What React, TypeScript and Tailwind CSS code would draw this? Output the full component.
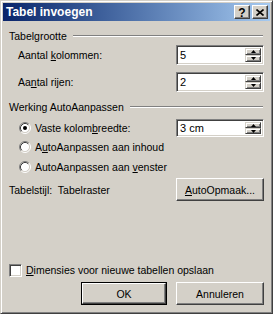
import React from "react";

const raised =
  "border border-t-white border-l-white border-r-[#404040] border-b-[#404040] shadow-[inset_-1px_-1px_#808080,inset_1px_1px_#d4d0c8]";
const sunken =
  "border border-t-[#808080] border-l-[#808080] border-r-white border-b-white shadow-[inset_1px_1px_#404040,inset_-1px_-1px_#d4d0c8]";

function Arrow({ up }: { up?: boolean }) {
  return (
    <svg width="5" height="3" viewBox="0 0 5 3" className="block">
      {up ? (
        <polygon points="2.5,0 5,3 0,3" fill="#000" />
      ) : (
        <polygon points="0,0 5,0 2.5,3" fill="#000" />
      )}
    </svg>
  );
}

function SpinBtn({ up, h }: { up?: boolean; h: string }) {
  return (
    <div
      className={`${h} w-[16px] bg-[#d4d0c8] flex items-center justify-center border border-t-[#d4d0c8] border-l-[#d4d0c8] border-r-[#404040] border-b-[#404040] shadow-[inset_1px_1px_#fff,inset_-1px_-1px_#808080]`}
    >
      <Arrow up={up} />
    </div>
  );
}

function Spin({ value, tall }: { value: string; tall?: boolean }) {
  return (
    <div className={`w-[88px] ${tall ? "h-[20px]" : "h-[18px]"} bg-white ${sunken} p-[2px] flex`}>
      <div className="flex-1 pl-[1px] flex items-center leading-[14px] text-[11px]">{value}</div>
      <div className="flex flex-col">
        <SpinBtn up h={tall ? "h-[8px]" : "h-[7px]"} />
        <SpinBtn h={tall ? "h-[8px]" : "h-[7px]"} />
      </div>
    </div>
  );
}

function Radio({ checked }: { checked?: boolean }) {
  return (
    <svg width="12" height="12" viewBox="0 0 12 12" className="block shrink-0">
      <circle cx="6" cy="6" r="4.5" fill="#fff" />
      <path d="M2.11 9.89 A5.5 5.5 0 0 1 9.89 2.11" stroke="#808080" fill="none" strokeWidth="1" />
      <path d="M9.89 2.11 A5.5 5.5 0 0 1 2.11 9.89" stroke="#ffffff" fill="none" strokeWidth="1" />
      <path d="M2.82 9.18 A4.5 4.5 0 0 1 9.18 2.82" stroke="#404040" fill="none" strokeWidth="1" />
      <path d="M9.18 2.82 A4.5 4.5 0 0 1 2.82 9.18" stroke="#d4d0c8" fill="none" strokeWidth="1" />
      {checked && <circle cx="6" cy="6" r="2" fill="#000" />}
    </svg>
  );
}

function GroupHeader({ title }: { title: string }) {
  return (
    <div className="h-[14px] flex items-center">
      <span className="leading-[14px] whitespace-nowrap">{title}</span>
      <div className="flex-1 ml-[6px] mr-[1px] h-[2px] border-t border-t-[#808080] border-b border-b-white" />
    </div>
  );
}

function PushButton({ children, def, w }: { children: React.ReactNode; def?: boolean; w: string }) {
  if (def) {
    return (
      <div className={`${w} h-[23px] border border-black`}>
        <div className={`w-full h-full bg-[#d4d0c8] ${raised} flex items-center justify-center leading-[14px]`}>
          {children}
        </div>
      </div>
    );
  }
  return (
    <div className={`${w} h-[23px] bg-[#d4d0c8] ${raised} flex items-center justify-center leading-[14px]`}>
      {children}
    </div>
  );
}

export default function App() {
  return (
    <div
      className="w-[273px] h-[314px] bg-[#d4d0c8] text-black text-[10.5px] border border-t-[#d4d0c8] border-l-[#d4d0c8] border-r-[#404040] border-b-[#404040] shadow-[inset_1px_1px_#fff,inset_-1px_-1px_#808080] p-[2px] flex flex-col"
      style={{ fontFamily: '"Liberation Sans", Arial, sans-serif' }}
    >
      {/* Title bar */}
      <div className="h-[18px] shrink-0 bg-linear-to-r from-[#0a246a] to-[#a6caf0] flex items-center pl-[3px] pr-[2px]">
        <span className="text-white font-bold text-[12px] leading-[14px] flex-1">Tabel invoegen</span>
        <div className={`w-[16px] h-[14px] bg-[#d4d0c8] ${raised} flex items-center justify-center`}>
          <span className="font-bold text-[12px] leading-[10px] mt-[1px]">?</span>
        </div>
        <div className={`ml-[2px] w-[16px] h-[14px] bg-[#d4d0c8] ${raised} flex items-center justify-center`}>
          <svg width="8" height="7" viewBox="0 0 8 7" className="block">
            <path d="M0.5 0.5 L7.5 6.5 M7.5 0.5 L0.5 6.5" stroke="#000" strokeWidth="1.6" />
          </svg>
        </div>
      </div>

      {/* Body */}
      <div className="flex-1 flex flex-col pl-[6px] pr-[6px] pb-[6px]">
        <div className="mt-[8px]">
          <GroupHeader title="Tabelgrootte" />
        </div>
        <div className="mt-[2px] h-[20px] flex items-center justify-between pl-[9px]">
          <span className="leading-[14px]">
            Aantal <u>k</u>olommen:
          </span>
          <Spin value="5" tall />
        </div>
        <div className="mt-[7px] h-[20px] flex items-center justify-between pl-[9px]">
          <span className="leading-[14px]">
            Aa<u>n</u>tal rijen:
          </span>
          <Spin value="2" tall />
        </div>

        <div className="mt-[8px]">
          <GroupHeader title="Werking AutoAanpassen" />
        </div>
        <div className="mt-[5px] h-[18px] flex items-center justify-between pl-[10px]">
          <div className="flex items-center gap-[4px]">
            <Radio checked />
            <span className="leading-[14px]">
              Vaste kolom<u>b</u>reedte:
            </span>
          </div>
          <Spin value="3 cm" />
        </div>
        <div className="mt-[2px] h-[16px] flex items-center pl-[10px] gap-[4px]">
          <Radio />
          <span className="leading-[14px]">
            A<u>u</u>toAanpassen aan inhoud
          </span>
        </div>
        <div className="mt-[4px] h-[16px] flex items-center pl-[10px] gap-[4px]">
          <Radio />
          <span className="leading-[14px]">
            AutoAanpassen aan <u>v</u>enster
          </span>
        </div>
        <div className="mt-[3px] h-[23px] flex items-center justify-between">
          <span className="leading-[14px]">Tabelstijl:&nbsp; Tabelraster</span>
          <PushButton w="w-[88px]">
            <span>
              <u>A</u>utoOpmaak...
            </span>
          </PushButton>
        </div>

        <div className="flex-1" />

        <div className="h-[14px] flex items-center gap-[4px]">
          <div className={`w-[13px] h-[13px] bg-white ${sunken}`} />
          <span className="leading-[14px]">
            <u>D</u>imensies voor nieuwe tabellen opslaan
          </span>
        </div>
        <div className="mt-[5px] flex justify-end gap-[9px]">
          <PushButton def w="w-[86px]">
            OK
          </PushButton>
          <PushButton w="w-[88px]">Annuleren</PushButton>
        </div>
      </div>
    </div>
  );
}
